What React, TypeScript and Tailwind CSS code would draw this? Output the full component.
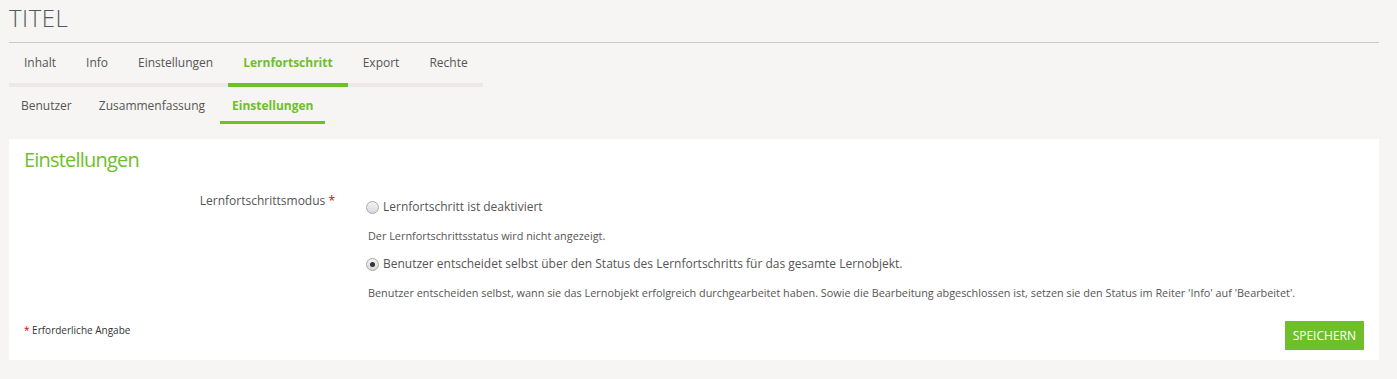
import React from "react";

const font = { fontFamily: '"Open Sans", "Noto Sans", sans-serif' };

function Radio({ checked }: { checked?: boolean }) {
  return (
    <span className="relative inline-block w-[13px] h-[13px] rounded-full border border-[#a9a9a9] bg-gradient-to-b from-[#f4f4f4] to-[#d8d8d8] shrink-0">
      {checked && (
        <span className="absolute left-[3px] top-[3px] w-[5px] h-[5px] rounded-full bg-[#333]" />
      )}
    </span>
  );
}

export default function App() {
  const tabs = ["Inhalt", "Info", "Einstellungen", "Lernfortschritt", "Export", "Rechte"];
  const subtabs = ["Benutzer", "Zusammenfassung", "Einstellungen"];
  return (
    <div className="w-[1397px] h-[379px] bg-[#f6f5f3] overflow-hidden text-[#555]" style={font}>
      <div className="pl-[9px] pr-[18px]">
        <h1 className="text-[24px] leading-[30px] font-light text-[#505a62] pt-[3px] tracking-[0.5px]">TITEL</h1>
        <div className="h-px bg-[#c9c9c9] mt-[9px]" />
        {/* Tabs */}
        <div className="inline-flex border-b-[4px] border-[#ede8e8] mt-0">
          {tabs.map((t) => {
            const active = t === "Lernfortschritt";
            return (
              <div
                key={t}
                className={
                  "pl-[15px] pr-[15px] pt-[11px] pb-[11px] text-[12px] leading-[18px] -mb-[4px] border-b-[4px] " +
                  (active
                    ? "border-[#6ebf2a] text-[#6ebf2a] font-bold"
                    : "border-transparent text-[#555]")
                }
              >
                {t}
              </div>
            );
          })}
        </div>
        {/* Sub tabs */}
        <div className="flex mt-0">
          {subtabs.map((t, i) => {
            const active = i === 2;
            return (
              <div
                key={t}
                className={
                  "px-[12px] pt-[10px] pb-[6px] text-[12px] leading-[18px] border-b-[3px] mr-[3px] " +
                  (active
                    ? "border-[#6ebf2a] text-[#6ebf2a] font-bold"
                    : "border-transparent text-[#555]")
                }
              >
                {t}
              </div>
            );
          })}
        </div>
        {/* Panel */}
        <div className="bg-white mt-[15px] px-[15px] pt-[8px] pb-[10px]">
          <h2 className="text-[20px] leading-[26px] text-[#6ebf2a] font-normal tracking-[-0.8px]">Einstellungen</h2>
          <div className="flex mt-[19px]">
            <div className="w-[311px] text-right text-[12px] leading-[18px] pt-[0px]">
              Lernfortschrittsmodus <span className="text-[#d00]">*</span>
            </div>
            <div className="ml-[31px] pt-[7px]">
              <div className="flex items-center gap-[4px] text-[12px] leading-[16px]">
                <Radio />
                <span>Lernfortschritt ist deaktiviert</span>
              </div>
              <div className="text-[10.85px] leading-[14px] mt-[14px] ml-[2px]">
                Der Lernfortschrittsstatus wird nicht angezeigt.
              </div>
              <div className="flex items-center gap-[4px] text-[12px] leading-[16px] mt-[13px]">
                <Radio checked />
                <span>Benutzer entscheidet selbst über den Status des Lernfortschritts für das gesamte Lernobjekt.</span>
              </div>
              <div className="text-[10.85px] leading-[14px] mt-[14px] ml-[2px]">
                Benutzer entscheiden selbst, wann sie das Lernobjekt erfolgreich durchgearbeitet haben. Sowie die Bearbeitung abgeschlossen ist, setzen sie den Status im Reiter 'Info' auf 'Bearbeitet'.
              </div>
            </div>
          </div>
          <div className="flex items-start justify-between mt-[17px]">
            <div className="text-[10px] leading-[14px] text-[#333] mt-[6px]">
              <span className="text-[#d00]">*</span> Erforderliche Angabe
            </div>
            <button className="bg-[#6ebf2a] text-white text-[12px] leading-[16px] px-[8px] py-[6.5px] mt-[4px] mr-[0px]">
              SPEICHERN
            </button>
          </div>
        </div>
      </div>
    </div>
  );
}
